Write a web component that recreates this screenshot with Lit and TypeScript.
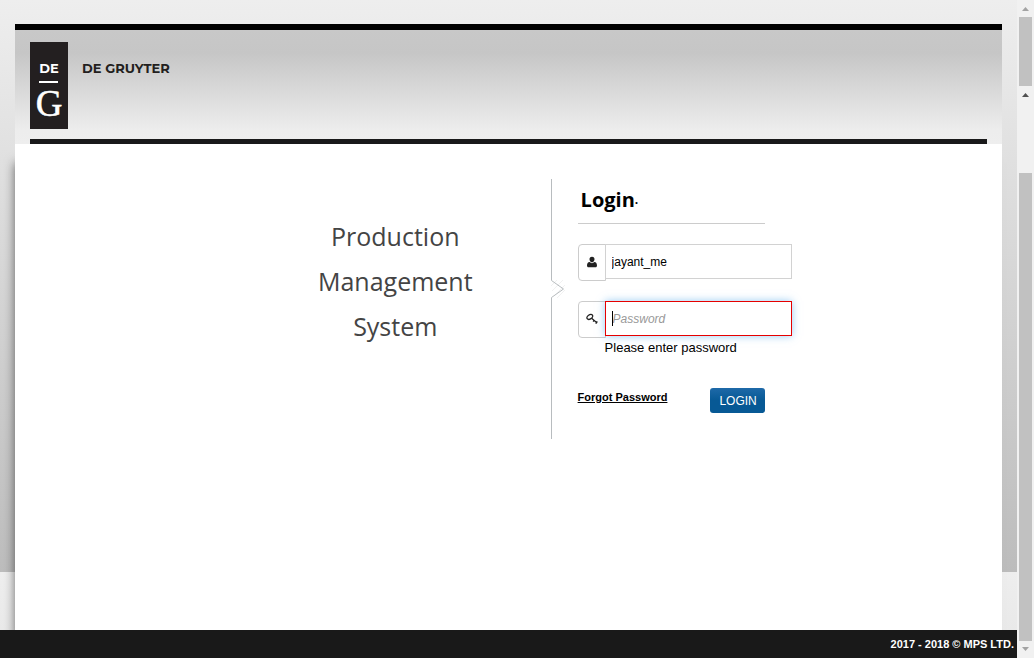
import { LitElement, html, css } from "lit";
import { customElement, state } from "lit/decorators.js";

@customElement("app-root")
export class AppRoot extends LitElement {
  @state() private username = "jayant_me";
  @state() private password = "";

  static styles = css`
    :host {
      display: flex;
      height: 100vh;
      overflow: hidden;
      font-family: "Liberation Sans", Arial, sans-serif;
      font-size: 13px;
      color: #000;
      background: #f1f1f1;
    }
    * { box-sizing: border-box; }
    .page {
      flex: 1;
      min-width: 0;
      display: flex;
      flex-direction: column;
      background: linear-gradient(#eee, #bcbcbc) 0 0 / 100% 572px repeat-y;
    }
    .sheet {
      flex: 1;
      margin: 24px 15px 0;
      display: flex;
      flex-direction: column;
    }
    header {
      border-top: 6px solid #000;
      padding: 12px 15px 0;
      background: linear-gradient(#c8c8c8, #c6c6c6 20%, #ededed 88%, #eee);
    }
    .brand {
      display: flex;
      gap: 14px;
      padding-bottom: 10px;
      border-bottom: 5px solid #19191a;
    }
    .mark { display: block; width: 38px; height: 87px; }
    .name {
      margin: 0;
      padding-top: 17px;
      font: 700 13px/18px "Montserrat", "Inter", sans-serif;
      color: #231f20;
    }
    main {
      flex: 1;
      display: flex;
      align-items: flex-start;
      padding: 35px 15px 0;
      background: #fff;
      box-shadow: -5px 14px 10px -5px rgba(0, 0, 0, 0.55);
      clip-path: inset(0 -8px 0 -12px);
    }
    .title {
      flex: 0 0 54.4%;
      margin: 0;
      padding: 35px 78px 0 0;
      display: flex;
      flex-direction: column;
      align-items: flex-end;
      text-align: center;
      font: 400 25px/45px "Open Sans", sans-serif;
      color: #444;
    }
    .title span { display: block; }
    .divider { flex: none; display: block; width: 14px; height: 260px; }
    form { margin: 0 0 0 13px; width: 214px; }
    h2 {
      width: 187px;
      height: 45px;
      margin: 0 0 20px;
      padding: 5px 3px 0;
      border-bottom: 1px solid #ccc;
      font: 700 20px/32px "Open Sans", sans-serif;
    }
    .dot { font-size: 12px; }
    .field { display: flex; align-items: flex-start; height: 37px; }
    .field + .field { margin-top: 20px; }
    .addon {
      display: flex;
      align-items: center;
      justify-content: center;
      width: 28px;
      height: 37px;
      padding-bottom: 2px;
      border: 1px solid #ccc;
      border-radius: 4px 0 0 4px;
    }
    input {
      flex: 1;
      min-width: 0;
      height: 35px;
      margin-left: -1px;
      padding: 0 6px;
      border: 1px solid #d2d2d2;
      border-radius: 0;
      outline: none;
      background: #fff;
      font: 12px "Liberation Sans", Arial, sans-serif;
      color: #000;
    }
    input.invalid {
      border-color: #e60000;
      box-shadow: 0 0 8px rgba(82, 168, 236, 0.6);
    }
    input.invalid:placeholder-shown {
      padding-left: 7px;
      caret-color: transparent;
      background: linear-gradient(#000, #000) 6px center / 1px 15px no-repeat #fff;
    }
    input::placeholder { color: #999; font-style: italic; opacity: 1; }
    .error { margin: 0 0 0 27px; line-height: 20px; }
    .actions {
      display: flex;
      justify-content: space-between;
      width: 187px;
      margin-top: 30px;
    }
    a { color: #000; font-weight: 700; font-size: 11px; line-height: 18px; }
    button {
      width: 55px;
      height: 25px;
      padding: 0 0 0 2px;
      border: 0;
      border-radius: 3px;
      background: linear-gradient(#1e69a8, #075995 50%);
      color: #fff;
      font: 12px "Liberation Sans", Arial, sans-serif;
    }
    footer {
      height: 28px;
      padding: 0 3px;
      background: #191919;
      color: #fff;
      text-align: right;
      font-size: 11px;
      font-weight: 700;
      line-height: 28px;
    }
    .scroll {
      width: 17px;
      display: flex;
      flex-direction: column;
      align-items: center;
      background: #f1f1f1;
    }
    .arrow { flex: none; display: block; width: 17px; height: 17px; fill: #a3a3a3; }
    .arrow.dark { fill: #505050; }
    .thumb { width: 13px; background: #c1c1c1; }
    .thumb.outer { height: 69px; }
    .thumb.inner { flex: 1; margin-top: 70px; }
  `;

  firstUpdated() {
    this.renderRoot.querySelector<HTMLInputElement>("#password")?.focus();
  }

  private submit(e: Event) {
    e.preventDefault();
  }

  render() {
    return html`
      <div class="page">
        <div class="sheet">
          <header>
            <div class="brand">
              <svg class="mark" viewBox="0 0 38 87" role="img" aria-label="De Gruyter logo">
                <rect width="38" height="87" fill="#231f20" />
                <g fill="#fff" text-anchor="middle">
                  <text x="19" y="31" font-family="Montserrat, Inter, sans-serif" font-weight="700" font-size="13">DE</text>
                  <rect x="9" y="39" width="19" height="2" />
                  <text x="19" y="74" font-family="Liberation Serif, serif" font-size="37" stroke="#fff" stroke-width=".5">G</text>
                </g>
              </svg>
              <p class="name">DE GRUYTER</p>
            </div>
          </header>
          <main>
            <h1 class="title">
              <span><span>Production</span><span>Management</span><span>System</span></span>
            </h1>
            <svg class="divider" viewBox="0 0 14 260" fill="none" aria-hidden="true">
              <path d="M0 107l6-6M1 112l11-11M3 117l13-13M6 119l10-10" stroke="#e8e8e8" stroke-width=".6" />
              <path d="M.5 0v101.500L12.500 110 .5 118.500V260" stroke="#b8bcbf" />
            </svg>
            <form @submit=${this.submit} novalidate>
              <h2>Login<span class="dot">·</span></h2>
              <div class="field">
                <label class="addon" for="username" aria-label="Username">
                  <svg width="12" height="12" viewBox="0 0 12 12" fill="#222" aria-hidden="true">
                    <path d="M6 .8c1.700 0 2.700 1.200 2.500 2.800C8.400 5 7.300 6.400 6 6.400S3.600 5 3.500 3.600C3.300 2 4.300.8 6 .8zM3.700 6.100C4.300 6.800 5.100 7.200 6 7.200s1.700-.4 2.300-1.100c1.900.2 2.700 1.500 2.700 3.600 0 .9-.6 1.500-1.500 1.500h-7C1.600 11.200 1 10.600 1 9.700c0-2.100.8-3.400 2.700-3.600z" />
                  </svg>
                </label>
                <input id="username" type="text" .value=${this.username}
                  @input=${(e: InputEvent) => (this.username = (e.target as HTMLInputElement).value)} />
              </div>
              <div class="field">
                <label class="addon" for="password" aria-label="Password">
                  <svg width="12" height="12" viewBox="0 0 12 12" fill="none" stroke="#222" aria-hidden="true">
                    <ellipse cx="3.800" cy="3.900" rx="3.200" ry="2.100" transform="rotate(-35 3.800 3.900)" stroke-width="1.300" />
                    <path d="M5.600 5.200l5.600 4.800M8.300 7.200L7.100 8.700M11.300 8.400L9.700 10.700" stroke-width="1.200" />
                  </svg>
                </label>
                <input id="password" class="invalid" type="password" placeholder="Password" .value=${this.password}
                  aria-invalid="true" aria-describedby="password-error"
                  @input=${(e: InputEvent) => (this.password = (e.target as HTMLInputElement).value)} />
              </div>
              <p class="error" id="password-error">Please enter password</p>
              <div class="actions">
                <a href="#">Forgot Password</a>
                <button type="submit">LOGIN</button>
              </div>
            </form>
          </main>
        </div>
        <footer>2017 - 2018 © MPS LTD.</footer>
      </div>
      <div class="scroll" aria-hidden="true">
        <svg class="arrow" viewBox="0 0 17 17"><path d="M5 11h7L8.500 7z" /></svg>
        <div class="thumb outer"></div>
        <svg class="arrow dark" viewBox="0 0 17 17"><path d="M5 11h7L8.500 7z" /></svg>
        <div class="thumb inner"></div>
        <svg class="arrow" viewBox="0 0 17 17"><path d="M5 6h7L8.500 10z" /></svg>
      </div>
    `;
  }
}
